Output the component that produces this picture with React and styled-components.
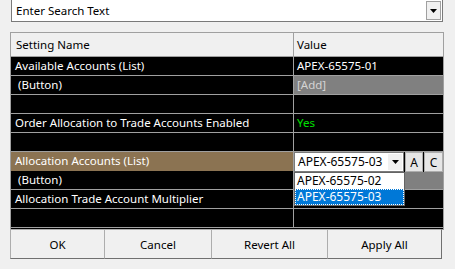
import styled, { createGlobalStyle } from "styled-components";

const GlobalStyle = createGlobalStyle`
  * {
    margin: 0;
    padding: 0;
    box-sizing: border-box;
  }
  body {
    background: #f0f0f0;
    font-family: "Noto Sans", "Open Sans", sans-serif;
    font-size: 11.5px;
    overflow: hidden;
  }
`;

const Page = styled.div`
  width: 455px;
  height: 269px;
  padding: 0 11px 0 10px;
  display: flex;
  flex-direction: column;
`;

const SearchBox = styled.div`
  margin-top: -1px;
  margin-left: 1px;
  margin-right: 1px;
  height: 23px;
  border: 1px solid #7a7a7a;
  background: #fff;
  display: flex;
  align-items: stretch;
`;

const SearchText = styled.div`
  flex: 1;
  padding-left: 4px;
  line-height: 21px;
  color: #000;
`;

const ArrowButton = styled.div`
  width: ${(p) => p.$w || 17}px;
  margin: 1px;
  background: #f0f0f0;
  border: 1px solid ${(p) => (p.$flat ? "#f0f0f0" : "#a0a0a0")};
  display: flex;
  align-items: center;
  justify-content: center;
`;

const Arrow = () => (
  <svg width="7" height="4" viewBox="0 0 7 4">
    <path d="M0 0 H7 L3.5 4 Z" fill="#000" />
  </svg>
);

const Grid = styled.div`
  margin-top: 10px;
  height: 198px;
  border: 1px solid #a0a0a0;
  background: #000;
  display: flex;
  flex-direction: column;
`;

const HeaderRow = styled.div`
  height: 24px;
  display: grid;
  grid-template-columns: 283px 1fr;
  background: #f0f0f0;
  border-bottom: 1px solid #a0a0a0;
`;

const HeaderCell = styled.div`
  padding-left: ${(p) => (p.$first ? 5 : 3)}px;
  line-height: 23px;
  color: #000;
  border-right: ${(p) => (p.$first ? "1px solid #a0a0a0" : "none")};
`;

const Row = styled.div`
  position: relative;
  height: 19px;
  display: grid;
  grid-template-columns: 283px 1fr;
  border-bottom: 1px solid #a0a0a0;
`;

const NameCell = styled.div`
  padding-left: 4px;
  line-height: 18px;
  color: #fff;
  white-space: nowrap;
  background: ${(p) => (p.$selected ? "#8b7352" : "#000")};
  border-right: 1px solid #a0a0a0;
`;

const ValueCell = styled.div`
  padding-left: 3px;
  line-height: 18px;
  white-space: nowrap;
  color: ${(p) => p.$color || "#fff"};
  background: ${(p) => p.$bg || "#000"};
`;

const EditorCell = styled.div`
  display: flex;
  align-items: stretch;
  background: #000;
  margin-bottom: -1px;
  position: relative;
  z-index: 1;
`;

const Combo = styled.div`
  width: 110px;
  background: #fff;
  border: 1px solid #7a7a7a;
  display: flex;
`;

const ComboText = styled.div`
  flex: 1;
  padding-left: 3px;
  line-height: 18px;
  font-size: 12px;
  color: #000;
`;

const SmallButton = styled.div`
  width: ${(p) => p.$w}px;
  margin-left: 1px;
  background: #e6e6e6;
  border: 1px solid #adadad;
  color: #000;
  display: flex;
  align-items: center;
  justify-content: center;
  font-size: 12px;
`;

const DropList = styled.div`
  position: absolute;
  left: 283px;
  top: 1px;
  width: 111px;
  background: #fff;
  border: 1px solid #646464;
  z-index: 2;
`;

const DropItem = styled.div`
  height: 16px;
  line-height: 15px;
  padding-left: 2px;
  font-size: 12px;
  color: ${(p) => (p.$active ? "#fff" : "#000")};
  background: ${(p) => (p.$active ? "#0078d7" : "#fff")};
  outline: ${(p) => (p.$active ? "1px dotted #ffffff" : "none")};
  outline-offset: -1px;
`;

const ButtonBar = styled.div`
  display: flex;
  margin-top: -1px;
`;

const DialogButton = styled.div`
  width: ${(p) => p.$w}px;
  height: 30px;
  margin-left: ${(p) => (p.$first ? 0 : -1)}px;
  border: 1px solid #adadad;
  border-right-color: #707070;
  border-bottom-color: #707070;
  background: #f0f0f0;
  color: #000;
  display: flex;
  align-items: center;
  justify-content: center;
`;

const rows = [
  { name: "Available Accounts (List)", value: "APEX-65575-01" },
  { name: " (Button)", value: "[Add]", bg: "#808080", color: "#d4d4d4" },
  { name: "", value: "" },
  { name: "Order Allocation to Trade Accounts Enabled", value: "Yes", color: "#00e000" },
  { name: "", value: "" },
  { name: "Allocation Accounts (List)", editor: true, selected: true },
  { name: " (Button)", value: "", bg: "#808080", list: true },
  { name: "Allocation Trade Account Multiplier", value: "" },
  { name: "", value: "" },
];

const App = () => {
  return (
    <>
      <GlobalStyle />
      <Page>
        <SearchBox>
          <SearchText>Enter Search Text</SearchText>
          <ArrowButton $w={15}>
            <Arrow />
          </ArrowButton>
        </SearchBox>
        <Grid>
          <HeaderRow>
            <HeaderCell $first>Setting Name</HeaderCell>
            <HeaderCell>Value</HeaderCell>
          </HeaderRow>
          {rows.map((r, i) => (
            <Row key={i}>
              <NameCell $selected={r.selected}>{r.name.replace(/^ /, "\u00a0")}</NameCell>
              {r.editor ? (
                <EditorCell>
                  <Combo>
                    <ComboText>APEX-65575-03</ComboText>
                    <ArrowButton $w={14} $flat>
                      <Arrow />
                    </ArrowButton>
                  </Combo>
                  <SmallButton $w={18}>A</SmallButton>
                  <SmallButton $w={19}>C</SmallButton>
                </EditorCell>
              ) : (
                <ValueCell $bg={r.bg} $color={r.color}>
                  {r.value}
                </ValueCell>
              )}
              {r.list && (
                <DropList>
                  <DropItem>APEX-65575-02</DropItem>
                  <DropItem $active>APEX-65575-03</DropItem>
                </DropList>
              )}
            </Row>
          ))}
        </Grid>
        <ButtonBar>
          <DialogButton $first $w={95}>OK</DialogButton>
          <DialogButton $w={108}>Cancel</DialogButton>
          <DialogButton $w={117}>Revert All</DialogButton>
          <DialogButton $w={115}>Apply All</DialogButton>
        </ButtonBar>
      </Page>
    </>
  );
};

export default App;
